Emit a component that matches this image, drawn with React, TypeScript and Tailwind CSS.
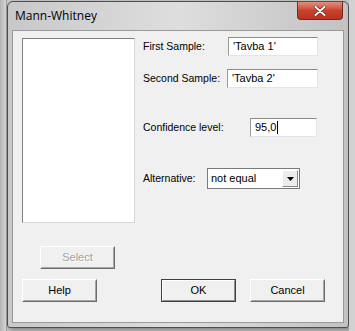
import React from 'react';

const font = { fontFamily: '"Liberation Sans", Arial, sans-serif' };

const Field: React.FC<{ value: string; caret?: boolean; className?: string }> = ({ value, caret, className }) => (
  <div
    className={`h-[19px] bg-white border border-[#e2e6ea] border-t-[#8a8a8a] border-l-[#9a9a9a] flex items-center pl-[4px] text-[11px] text-black ${className ?? ''}`}
  >
    <span>{value}</span>
    {caret && <span className="w-[1px] h-[13px] bg-black ml-[1px]" />}
  </div>
);

const Btn: React.FC<{ label: string; disabled?: boolean; isDefault?: boolean; className?: string }> = ({
  label,
  disabled,
  isDefault,
  className,
}) => (
  <div
    className={`h-[23px] w-[75px] flex items-center justify-center text-[11px] bg-[#f0f0f0] border ${
      isDefault ? 'border-[#404040]' : 'border-t-[#ffffff] border-l-[#ffffff] border-r-[#6d6d6d] border-b-[#6d6d6d]'
    } ${className ?? ''}`}
  >
    <div
      className={`w-full h-full flex items-center justify-center border ${
        isDefault
          ? 'border-t-[#ffffff] border-l-[#ffffff] border-r-[#8c8c8c] border-b-[#8c8c8c]'
          : 'border-t-[#f0f0f0] border-l-[#f0f0f0] border-r-[#a6a6a6] border-b-[#a6a6a6]'
      }`}
    >
      <span className={disabled ? 'text-[#a0a0a0] [text-shadow:1px_1px_0_#ffffff]' : 'text-black'}>{label}</span>
    </div>
  </div>
);

export default function App() {
  return (
    <div className="w-[355px] h-[331px] overflow-hidden bg-[#c6c6c6] flex" style={font}>
      {/* left scrollbar strip behind window */}
      <div className="w-[7px] h-full bg-gradient-to-r from-[#b4b4b4] to-[#d6d6d6] border-r border-[#9c9c9c]" />

      {/* window */}
      <div className="mt-[1px] w-[342px] h-[327px] rounded-t-[6px] rounded-b-[3px] border border-[#4e4e4e] bg-gradient-to-r from-[#c8c8c8] via-[#dedede] to-[#c2c2c2] flex flex-col shadow-[2px_2px_4px_rgba(0,0,0,0.35)]">
        {/* title bar */}
        <div className="h-[28px] flex items-start justify-between pl-[7px] pr-[5px]">
          <span className="mt-[5px] text-[12px] text-black" style={{ fontFamily: '"Open Sans", "Noto Sans", sans-serif' }}>
            Mann-Whitney
          </span>
          <div className="w-[46px] h-[18px] rounded-b-[4px] border border-t-0 border-[#6e2b22] bg-gradient-to-b from-[#e09080] via-[#c8422e] to-[#b8321f] flex items-center justify-center">
            <svg width="12" height="10" viewBox="0 0 12 10">
              <path d="M1.5 1 L10.5 9 M10.5 1 L1.5 9" stroke="#5a1a12" strokeWidth="3.2" strokeLinecap="round" />
              <path d="M1.5 1 L10.5 9 M10.5 1 L1.5 9" stroke="#ffffff" strokeWidth="2" strokeLinecap="round" />
            </svg>
          </div>
        </div>

        {/* client area */}
        <div className="mx-[4px] h-[293px] bg-[#f0f0f0] border border-[#9a9a9a] flex flex-col px-[9px] pt-[7px]">
          <div className="flex">
            <div className="w-[113px] h-[185px] bg-white border border-[#828282] border-r-[#d8d8d8] border-b-[#d8d8d8]" />

            <div className="ml-[8px] flex flex-col text-[10.5px] text-black">
              <div className="-mt-[1px] flex items-center h-[19px]">
                <span className="w-[85px]">First Sample:</span>
                <Field value="'Tavba 1'" className="w-[90px]" />
              </div>
              <div className="mt-[13px] flex items-center h-[19px]">
                <span className="w-[84px]">Second Sample:</span>
                <Field value="'Tavba 2'" className="w-[91px]" />
              </div>
              <div className="mt-[30px] flex items-center h-[19px]">
                <span className="w-[107px]">Confidence level:</span>
                <Field value="95,0" caret className="w-[67px]" />
              </div>
              <div className="mt-[31px] flex items-center h-[21px]">
                <span className="w-[64px]">Alternative:</span>
                <div className="w-[93px] h-[21px] bg-white border border-[#7a7a7a] flex items-center justify-between pl-[3px] pr-[1px] text-[11px]">
                  <span>not equal</span>
                  <div className="w-[16px] h-[17px] bg-[#ececec] border border-t-[#ffffff] border-l-[#ffffff] border-r-[#8a8a8a] border-b-[#8a8a8a] flex items-center justify-center">
                    <svg width="7" height="4" viewBox="0 0 7 4">
                      <path d="M0 0 H7 L3.5 4 Z" fill="#000" />
                    </svg>
                  </div>
                </div>
              </div>
            </div>
          </div>

          <Btn label="Select" disabled className="mt-[23px] ml-[18px]" />

          <div className="mt-[10px] flex">
            <Btn label="Help" />
            <Btn label="OK" isDefault className="ml-[64px]" />
            <Btn label="Cancel" className="ml-[14px]" />
          </div>
        </div>
      </div>

      {/* right strip behind window */}
      <div className="flex-1 h-full bg-[#d2d2d2]" />
    </div>
  );
}
